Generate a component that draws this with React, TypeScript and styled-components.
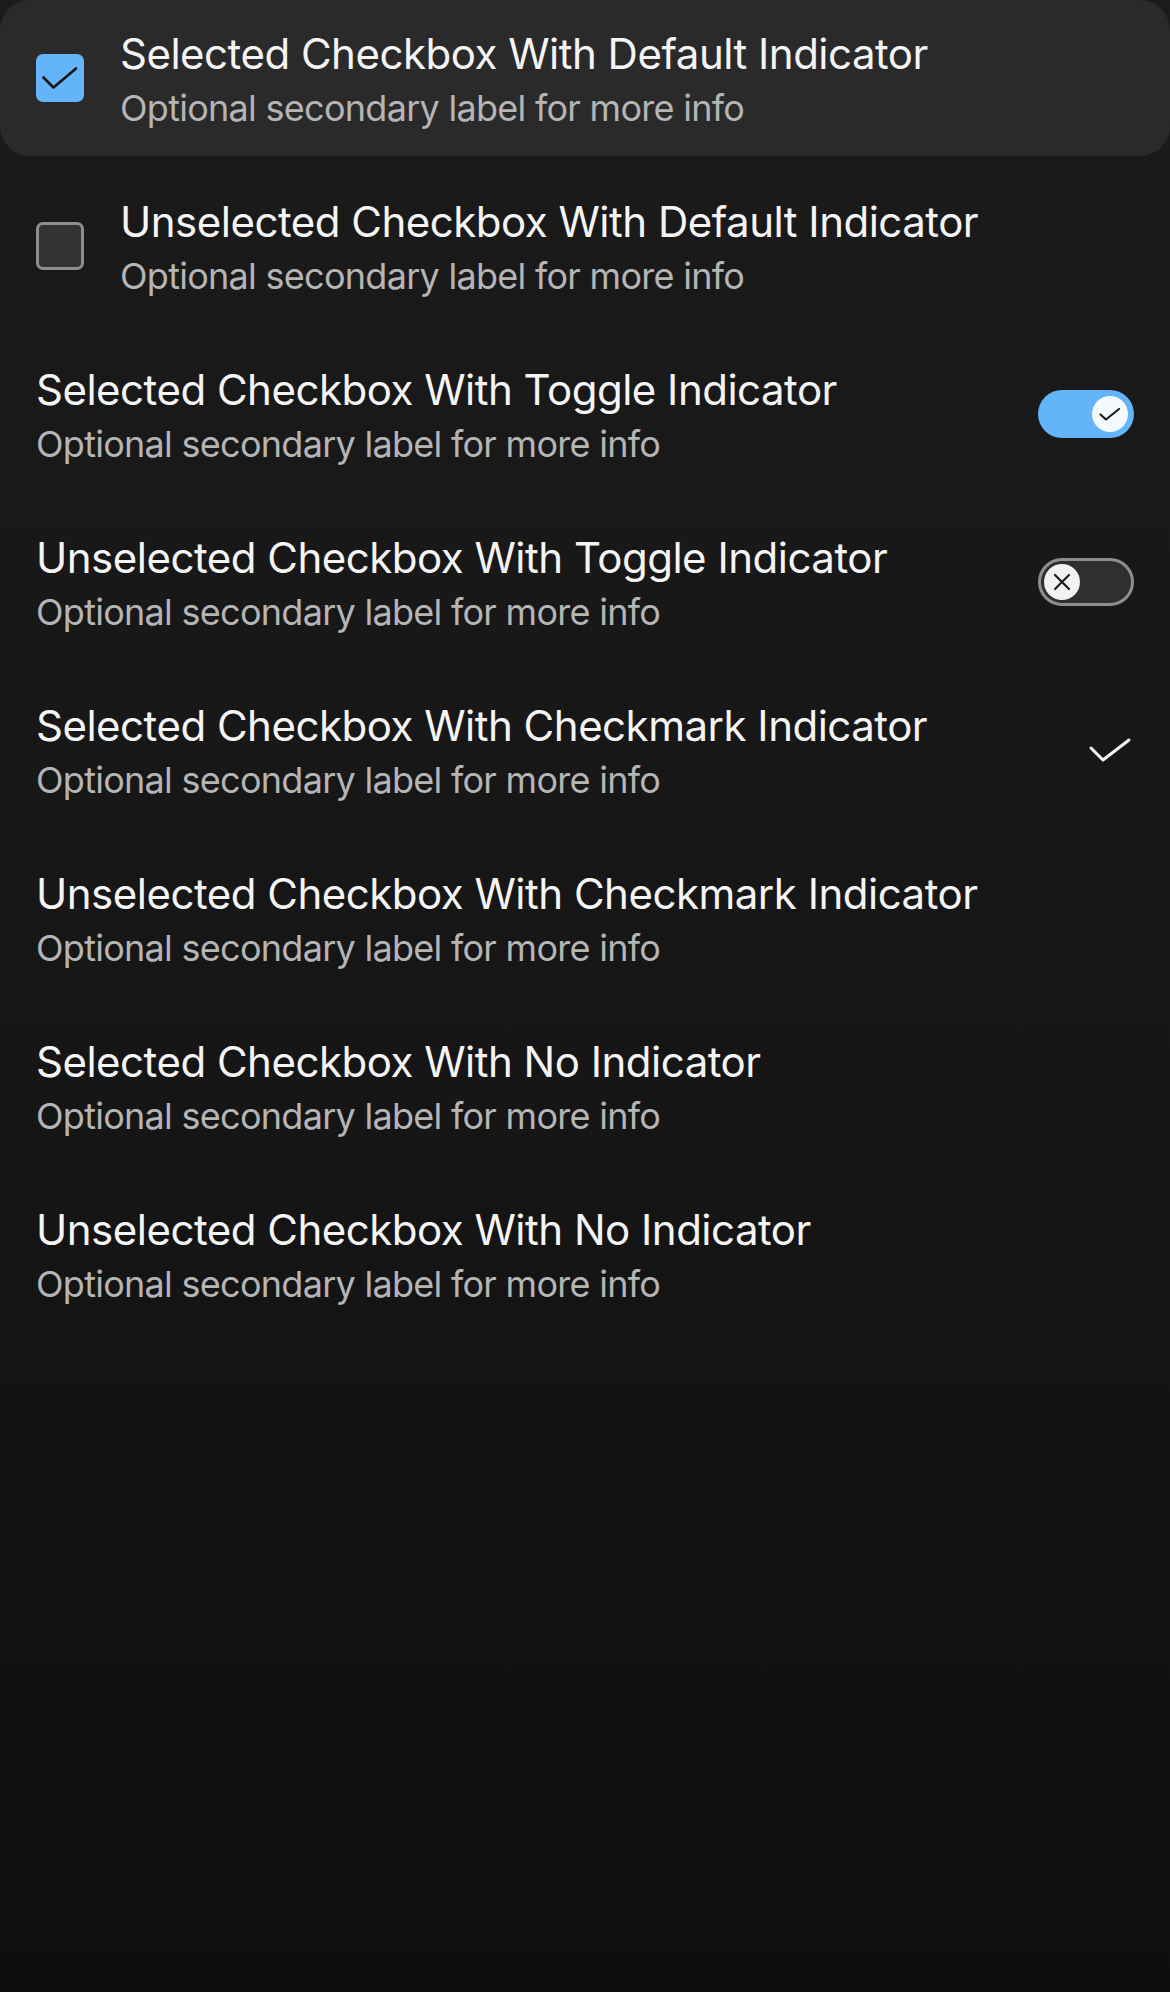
import React from "react";
import styled, { createGlobalStyle } from "styled-components";

const GlobalStyle = createGlobalStyle`
  html, body {
    margin: 0;
    padding: 0;
  }
  body {
    font-family: Inter, "Noto Sans", "Liberation Sans", sans-serif;
    background: linear-gradient(180deg, #1b1b1b 0%, #151515 60%, #0e0e0e 100%);
    min-height: 1992px;
    -webkit-font-smoothing: antialiased;
  }
`;

const Page = styled.div`
  width: 1170px;
  min-height: 1992px;
  box-sizing: border-box;
`;

const List = styled.ul`
  list-style: none;
  margin: 0;
  padding: 0;
  display: flex;
  flex-direction: column;
  gap: 12px;
`;

const Row = styled.li<{ $highlighted?: boolean }>`
  display: flex;
  align-items: center;
  gap: 36px;
  height: 156px;
  padding: 0 36px;
  box-sizing: border-box;
  border-radius: 30px;
  background: ${(p) => (p.$highlighted ? "#2a2a2a" : "transparent")};
`;

const Labels = styled.div`
  flex: 1;
  display: flex;
  flex-direction: column;
  min-width: 0;
`;

const Title = styled.div`
  font-size: 42px;
  line-height: 60px;
  color: #f4f4f4;
  letter-spacing: -0.5px;
`;

const Subtitle = styled.div`
  font-size: 36px;
  line-height: 48px;
  color: #b5b5b5;
  letter-spacing: -0.72px;
`;

const Box = styled.span<{ $checked: boolean }>`
  flex: none;
  width: 48px;
  height: 48px;
  box-sizing: border-box;
  border-radius: 7px;
  display: flex;
  align-items: center;
  justify-content: center;
  background: ${(p) => (p.$checked ? "#63b4f9" : "#333333")};
  border: ${(p) => (p.$checked ? "none" : "3px solid #8e8e8e")};
`;

const Track = styled.span<{ $on: boolean }>`
  flex: none;
  width: 96px;
  height: 48px;
  box-sizing: border-box;
  border-radius: 24px;
  display: flex;
  align-items: center;
  justify-content: ${(p) => (p.$on ? "flex-end" : "flex-start")};
  padding: 0 ${(p) => (p.$on ? "6px" : "3px")};
  background: ${(p) => (p.$on ? "#63b4f9" : "#2f2f2f")};
  border: ${(p) => (p.$on ? "none" : "3px solid #8e8e8e")};
`;

const Knob = styled.span<{ $on: boolean }>`
  width: 36px;
  height: 36px;
  border-radius: 50%;
  display: flex;
  align-items: center;
  justify-content: center;
  background: ${(p) => (p.$on ? "#f5faff" : "#f2f2f2")};
`;

const CheckSlot = styled.span`
  flex: none;
  width: 48px;
  height: 48px;
  display: flex;
  align-items: center;
  justify-content: center;
`;

const BoxCheck = () => (
  <svg width="48" height="48" viewBox="0 0 48 48" fill="none">
    <path d="M7.5 23.5 L17.5 33.5 L40 14.5" stroke="#151515" strokeWidth="2.6" strokeLinecap="round" strokeLinejoin="round" />
  </svg>
);

const KnobCheck = () => (
  <svg width="36" height="36" viewBox="0 0 36 36" fill="none">
    <path d="M8.5 18.5 L14 23.5 L27 13" stroke="#1c1c1c" strokeWidth="2.2" strokeLinecap="round" strokeLinejoin="round" />
  </svg>
);

const KnobCross = () => (
  <svg width="36" height="36" viewBox="0 0 36 36" fill="none">
    <path d="M11 11 L25 25 M25 11 L11 25" stroke="#1c1c1c" strokeWidth="2.2" strokeLinecap="round" />
  </svg>
);

const Checkmark = () => (
  <svg width="48" height="48" viewBox="0 0 48 48" fill="none">
    <path d="M5 22 L17 34 L43 14" stroke="#f4f4f4" strokeWidth="3" strokeLinecap="round" strokeLinejoin="round" />
  </svg>
);

type Indicator = "default" | "toggle" | "checkmark" | "none";

interface Item {
  title: string;
  selected: boolean;
  indicator: Indicator;
  highlighted?: boolean;
}

const items: Item[] = [
  { title: "Selected Checkbox With Default Indicator", selected: true, indicator: "default", highlighted: true },
  { title: "Unselected Checkbox With Default Indicator", selected: false, indicator: "default" },
  { title: "Selected Checkbox With Toggle Indicator", selected: true, indicator: "toggle" },
  { title: "Unselected Checkbox With Toggle Indicator", selected: false, indicator: "toggle" },
  { title: "Selected Checkbox With Checkmark Indicator", selected: true, indicator: "checkmark" },
  { title: "Unselected Checkbox With Checkmark Indicator", selected: false, indicator: "checkmark" },
  { title: "Selected Checkbox With No Indicator", selected: true, indicator: "none" },
  { title: "Unselected Checkbox With No Indicator", selected: false, indicator: "none" },
];

const CheckboxRow = ({ item }: { item: Item }) => {
  const labels = (
    <Labels>
      <Title>{item.title}</Title>
      <Subtitle>Optional secondary label for more info</Subtitle>
    </Labels>
  );
  return (
    <Row $highlighted={item.highlighted} role="checkbox" aria-checked={item.selected}>
      {item.indicator === "default" && (
        <Box $checked={item.selected}>{item.selected && <BoxCheck />}</Box>
      )}
      {labels}
      {item.indicator === "toggle" && (
        <Track $on={item.selected}>
          <Knob $on={item.selected}>{item.selected ? <KnobCheck /> : <KnobCross />}</Knob>
        </Track>
      )}
      {item.indicator === "checkmark" && item.selected && (
        <CheckSlot>
          <Checkmark />
        </CheckSlot>
      )}
    </Row>
  );
};

export default function App() {
  return (
    <>
      <GlobalStyle />
      <Page>
        <List>
          {items.map((it) => (
            <CheckboxRow key={it.title} item={it} />
          ))}
        </List>
      </Page>
    </>
  );
}
